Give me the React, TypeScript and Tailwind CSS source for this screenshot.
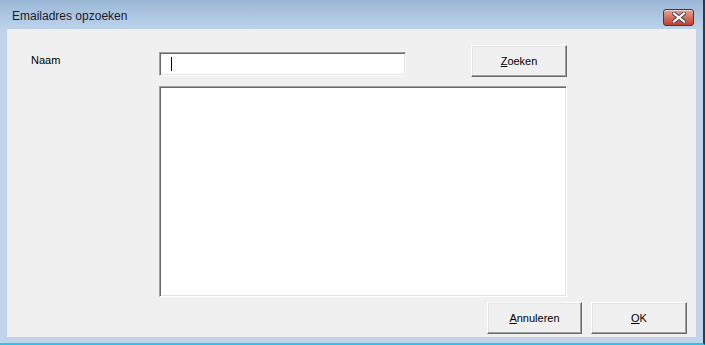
import React from "react";

const sunken =
  "bg-white border border-t-[#a0a0a0] border-l-[#a0a0a0] border-b-white border-r-white shadow-[inset_1px_1px_0_#696969,inset_-1px_-1px_0_#e3e3e3]";
const raised =
  "bg-[#f0f0f0] border border-t-white border-l-white border-b-[#696969] border-r-[#696969] shadow-[inset_-1px_-1px_0_#a0a0a0,inset_1px_1px_0_#e3e3e3] flex items-center justify-center text-[11px] text-black";

export default function App() {
  return (
    <div
      className="w-[705px] h-[345px] flex flex-col bg-[#bfd4ec] border-r-2 border-r-[#2e3a46] border-b-2 border-b-[#29c4e9]"
      style={{ fontFamily: '"Liberation Sans", Arial, sans-serif' }}
    >
      <div className="h-[29px] flex items-start justify-between bg-gradient-to-b from-[#9ab7d7] to-[#bdd3eb]">
        <div className="pl-[12px] pt-[9px] text-[12px] leading-[14px] text-[#1a1a2a]">Emailadres opzoeken</div>
        <div className="mt-[9px] mr-[9px] w-[31px] h-[17px] rounded-[3px] border border-[#6a2a24] bg-gradient-to-b from-[#e8a397] via-[#d3715f] to-[#c0412c] flex items-center justify-center shadow-[inset_0_1px_0_rgba(255,255,255,0.5)]">
          <svg width="14" height="11" viewBox="0 0 14 11">
            <path d="M2 1.5 L12 9.5 M12 1.5 L2 9.5" stroke="#3b3b4a" strokeWidth="4" strokeLinecap="square" />
            <path d="M2 1.5 L12 9.5 M12 1.5 L2 9.5" stroke="#ffffff" strokeWidth="2.2" strokeLinecap="square" />
          </svg>
        </div>
      </div>
      <div className="flex-1 px-[7px] pb-[6px]">
        <div className="w-full h-full bg-[#f0f0f0] pt-[16px] flex flex-col">
          <div className="flex items-start">
            <div className="w-[152px] pl-[24px] pt-[9px] text-[11px] leading-[13px] text-black">Naam</div>
            <div className={`w-[247px] h-[24px] mt-[7px] ${sunken} flex items-center pl-[11px]`}>
              <div className="w-[1px] h-[14px] bg-black" />
            </div>
            <button className={`ml-[65px] w-[96px] h-[32px] ${raised}`}>
              <span><span className="underline">Z</span>oeken</span>
            </button>
          </div>
          <div className="flex mt-[9px] pl-[152px]">
            <div className={`w-[408px] h-[211px] ${sunken}`} />
          </div>
          <div className="flex mt-[5px] pl-[480px] gap-[9px]">
            <button className={`w-[95px] h-[32px] ${raised}`}>
              <span><span className="underline">A</span>nnuleren</span>
            </button>
            <button className={`w-[96px] h-[32px] ${raised}`}>
              <span><span className="underline">O</span>K</span>
            </button>
          </div>
        </div>
      </div>
    </div>
  );
}
